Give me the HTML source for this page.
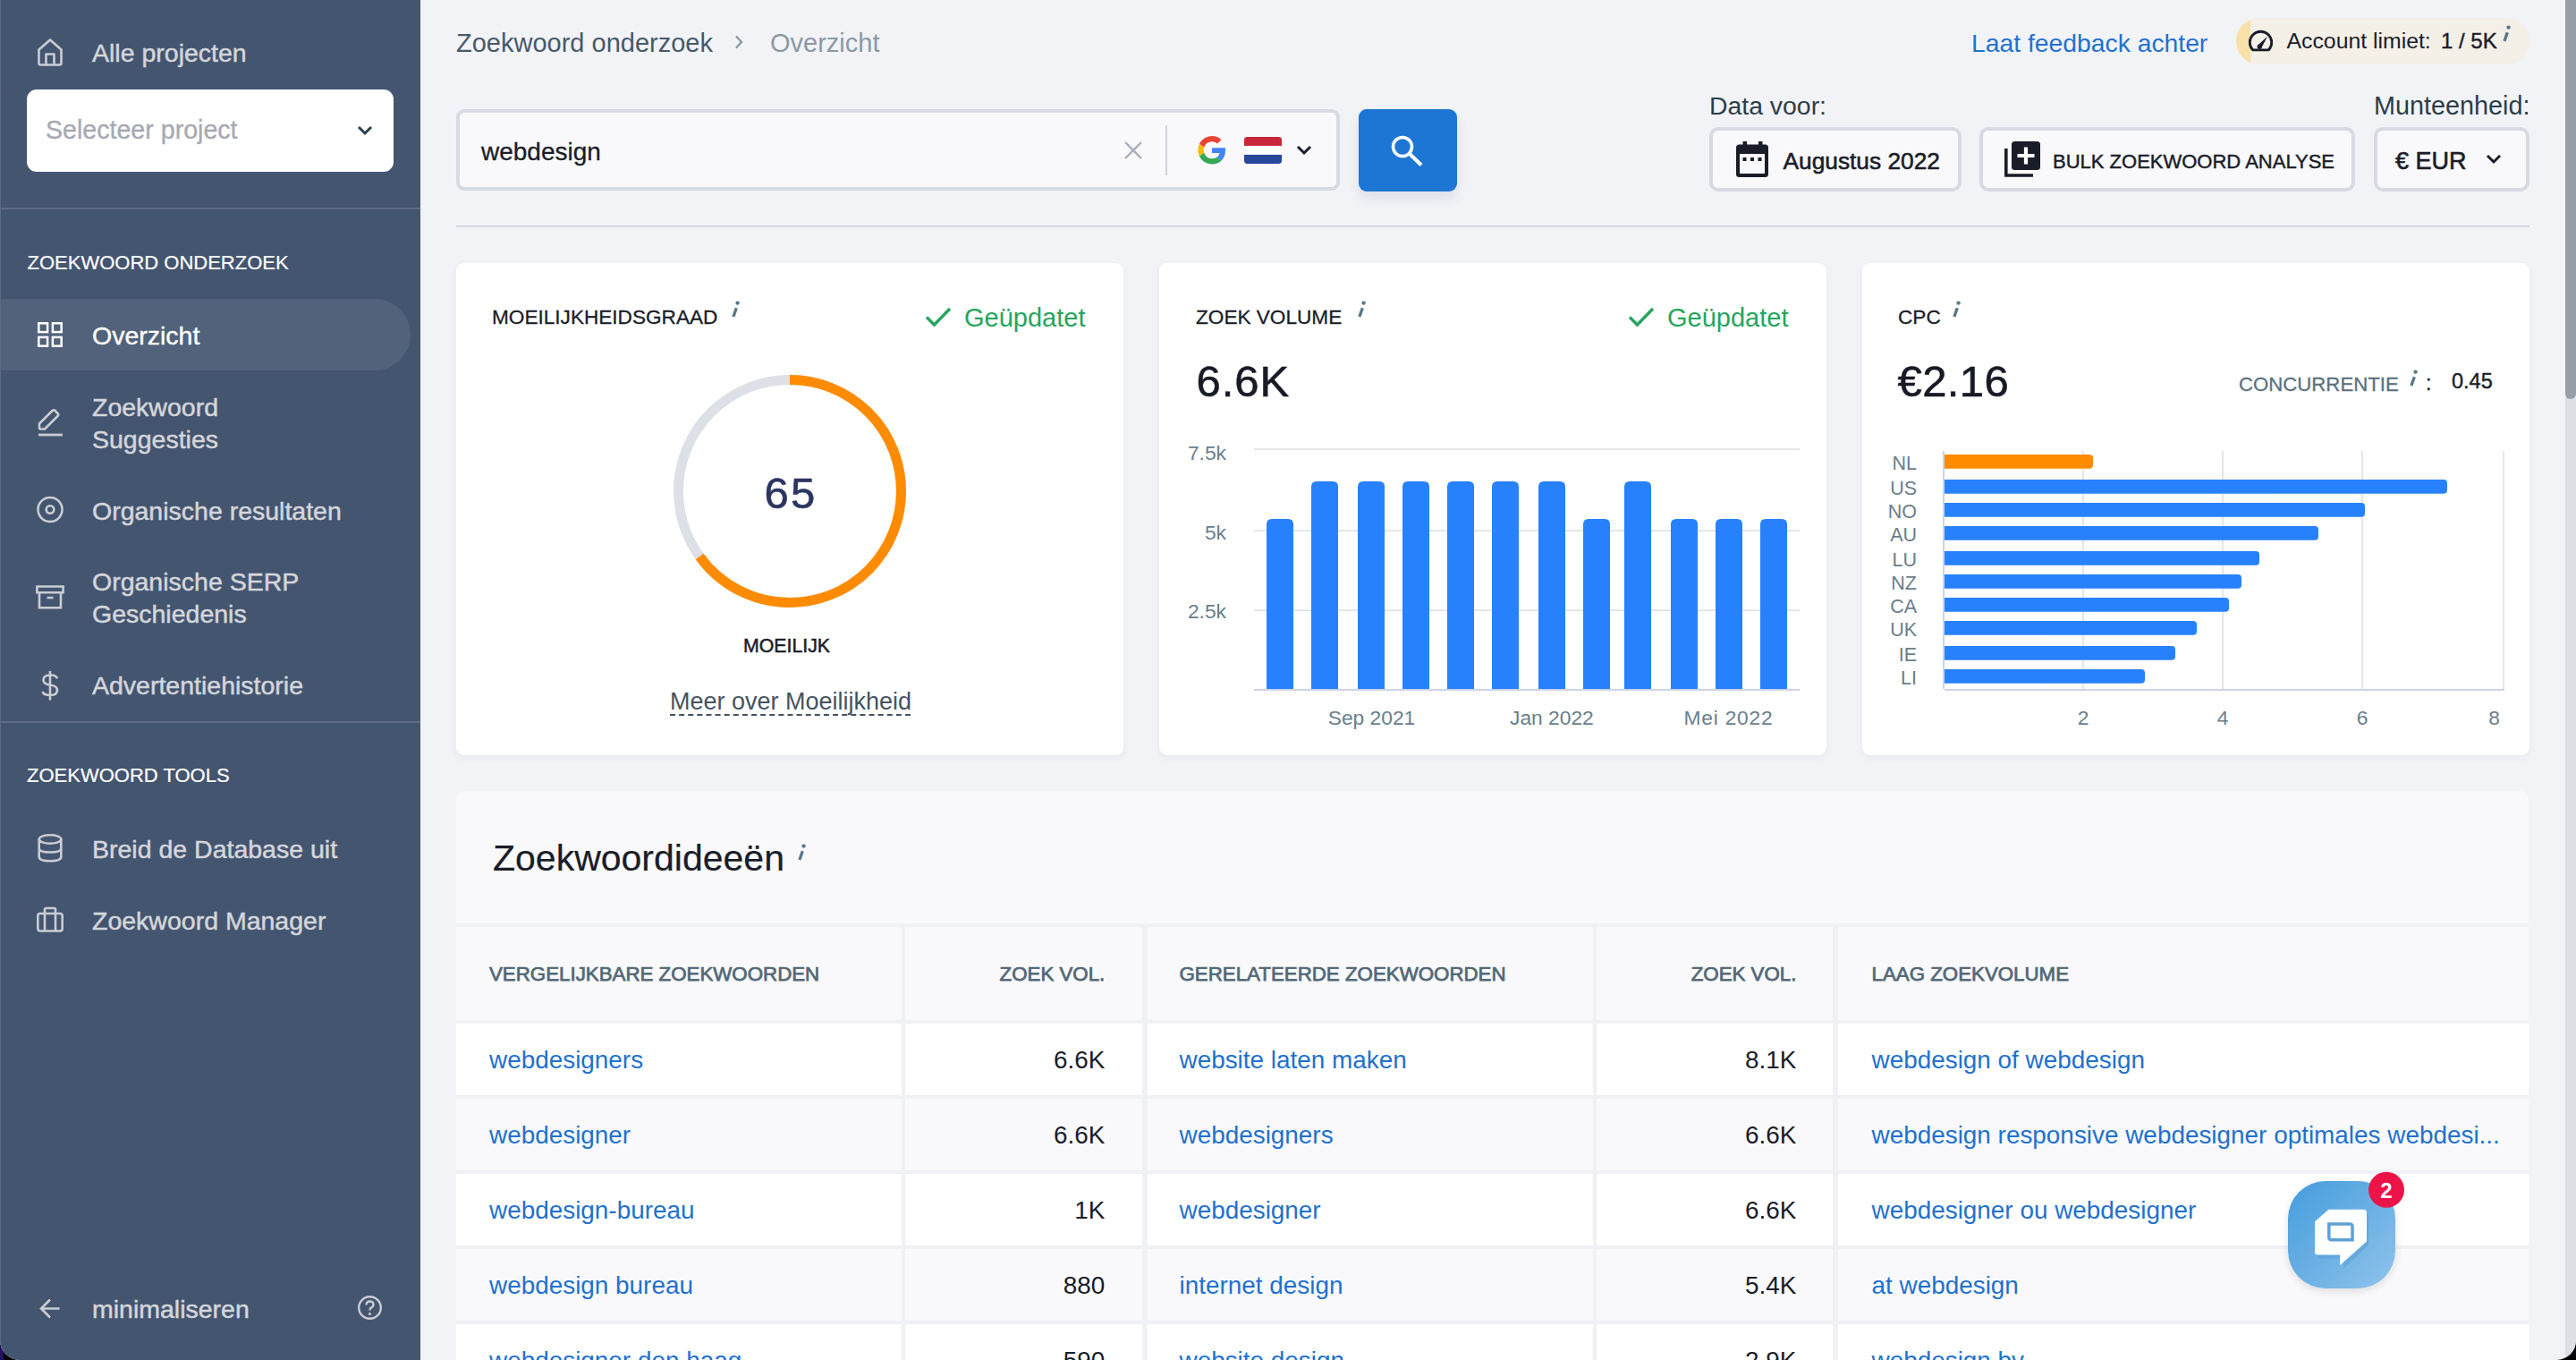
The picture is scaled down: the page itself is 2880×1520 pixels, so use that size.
<!DOCTYPE html>
<html><head><meta charset="utf-8">
<style>
*{margin:0;padding:0;box-sizing:border-box}
html,body{width:2880px;height:1520px;overflow:hidden;background:linear-gradient(to right,#23105F 0 4px,#000 4px)}
body{font-family:"Liberation Sans",sans-serif;position:relative}
#win{position:absolute;left:0;top:0;width:2880px;height:1520px;background:#F2F3F7;border-radius:0 0 22px 22px;overflow:hidden}
.t{position:absolute;line-height:1;white-space:nowrap}
.abs{position:absolute}
#side{position:absolute;left:0;top:0;width:470px;height:1520px;background:#445570}
.sl{color:#D3D6DB;font-size:28.5px;-webkit-text-stroke:0.5px #D3D6DB}
.sh{color:#FFFFFF;font-size:22px;-webkit-text-stroke:0.2px #fff}
.ic{position:absolute;overflow:visible}
.card{position:absolute;top:294px;width:746px;height:550px;background:#fff;border-radius:9px;box-shadow:0 3px 8px rgba(40,50,80,0.05)}
.ct{color:#1A1D29;font-size:22.6px;-webkit-text-stroke:0.3px #1A1D29}
.sup{position:absolute;color:#5E7686;font-style:italic;font-size:21px;line-height:1;-webkit-text-stroke:0.3px #5E7686}
.upd{color:#27A55E;font-size:29px}
.ax{color:#6A7E8C;font-size:22.8px}
.big{color:#181B26;font-size:49px;-webkit-text-stroke:0.6px #181B26}
</style></head><body>
<div id="win">
<!-- SIDEBAR -->
<div id="side">
  <!-- home icon -->
  <svg class="ic" style="left:40px;top:41px" width="32" height="34" viewBox="0 0 32 34"><path d="M3.5 14.5 L16 3.5 L28.5 14.5 V29.5 Q28.5 31.5 26.5 31.5 H5.5 Q3.5 31.5 3.5 29.5 Z M11.5 31.5 V19.5 H20.5 V31.5" fill="none" stroke="#C9CDD4" stroke-width="2.6" stroke-linejoin="round"/></svg>
  <div class="t sl" style="left:103px;top:45.2px">Alle projecten</div>
  <div class="abs" style="left:30px;top:100px;width:410px;height:92px;background:#fff;border-radius:11px"></div>
  <div class="t" style="left:51px;top:131.4px;font-size:28.6px;color:#A6A9B3;-webkit-text-stroke:0.3px #A6A9B3">Selecteer project</div>
  <svg class="ic" style="left:398px;top:139px" width="20" height="14" viewBox="0 0 20 14"><path d="M3 3 L10 10 L17 3" fill="none" stroke="#2E3F4A" stroke-width="3"/></svg>
  <div class="abs" style="left:0;top:232px;width:470px;height:2px;background:#5D6C83"></div>
  <div class="t sh" style="left:30.5px;top:283.4px">ZOEKWOORD ONDERZOEK</div>
  <div class="abs" style="left:0;top:334px;width:459px;height:80px;background:#52627A;border-radius:0 40px 40px 0"></div>
  <svg class="ic" style="left:42px;top:360px" width="28" height="28" viewBox="0 0 28 28"><g fill="none" stroke="#fff" stroke-width="2.5"><rect x="1.3" y="1.3" width="9.8" height="9.8"/><rect x="16.9" y="1.3" width="9.8" height="9.8"/><rect x="1.3" y="16.9" width="9.8" height="9.8"/><rect x="16.9" y="16.9" width="9.8" height="9.8"/></g></svg>
  <div class="t sl" style="left:103px;top:361px;color:#fff;-webkit-text-stroke:0.4px #fff">Overzicht</div>
  <!-- pencil -->
  <svg class="ic" style="left:41px;top:455px" width="30" height="34" viewBox="0 0 30 34"><path d="M3 23.5 V18.5 L17.5 4 Q19 2.6 20.5 4 L23.5 7 Q25 8.5 23.5 10 L9 24.5 H3.5 Z" fill="none" stroke="#C9CDD4" stroke-width="2.6" stroke-linejoin="round"/><path d="M2 31 H29" stroke="#C9CDD4" stroke-width="2.8"/></svg>
  <div class="t sl" style="left:103px;top:440.9px">Zoekwoord</div>
  <div class="t sl" style="left:103px;top:476.9px">Suggesties</div>
  <!-- target -->
  <svg class="ic" style="left:40px;top:554px" width="32" height="32" viewBox="0 0 32 32"><circle cx="16" cy="15.5" r="13.5" fill="none" stroke="#C9CDD4" stroke-width="2.6"/><circle cx="16" cy="15.5" r="4.3" fill="none" stroke="#C9CDD4" stroke-width="2.6"/></svg>
  <div class="t sl" style="left:103px;top:557.3px">Organische resultaten</div>
  <!-- box -->
  <svg class="ic" style="left:39px;top:654px" width="34" height="28" viewBox="0 0 34 28"><path d="M2.4 1.5 H31.6 V8.2 H2.4 Z M5 8.2 V25.3 H29 V8.2 M13.5 14 H20.5" fill="none" stroke="#C9CDD4" stroke-width="2.6"/></svg>
  <div class="t sl" style="left:103px;top:635.9px">Organische SERP</div>
  <div class="t sl" style="left:103px;top:671.9px">Geschiedenis</div>
  <!-- dollar -->
  <svg class="ic" style="left:44px;top:749px" width="24" height="35" viewBox="0 0 24 35"><path d="M20 9.5 Q19 5.5 12.5 5.5 Q4.5 5.5 4.5 11 Q4.5 15.5 12 16.5 Q20 17.5 20 22.5 Q20 28 12 28 Q5 28 3.5 24 M12 1 V33.5" fill="none" stroke="#C9CDD4" stroke-width="2.6"/></svg>
  <div class="t sl" style="left:103px;top:751.9px">Advertentiehistorie</div>
  <div class="abs" style="left:0;top:805.5px;width:470px;height:2px;background:#5D6C83"></div>
  <div class="t sh" style="left:30px;top:856.2px">ZOEKWOORD TOOLS</div>
  <!-- db -->
  <svg class="ic" style="left:41px;top:931px" width="30" height="34" viewBox="0 0 30 34"><g fill="none" stroke="#C9CDD4" stroke-width="2.6"><ellipse cx="15" cy="7" rx="12.3" ry="4.8"/><path d="M2.7 7 V26.5 Q2.7 31.3 15 31.3 Q27.3 31.3 27.3 26.5 V7 M2.7 17 Q2.7 21.5 15 21.5 Q27.3 21.5 27.3 17"/></g></svg>
  <div class="t sl" style="left:103px;top:935.2px">Breid de Database uit</div>
  <!-- briefcase -->
  <svg class="ic" style="left:40px;top:1013px" width="32" height="30" viewBox="0 0 32 30"><g fill="none" stroke="#C9CDD4" stroke-width="2.6" stroke-linejoin="round"><rect x="2.3" y="8" width="27.4" height="19.5" rx="2.5"/><path d="M10 8 V3.5 Q10 2 11.5 2 H20.5 Q22 2 22 3.5 V8 M10 8 V27.5 M22 8 V27.5"/></g></svg>
  <div class="t sl" style="left:103px;top:1014.7px">Zoekwoord Manager</div>
  <!-- arrow -->
  <svg class="ic" style="left:43px;top:1449px" width="26" height="27" viewBox="0 0 26 27"><path d="M23.5 13.5 H3.5 M13 3.5 L3 13.5 L13 23.5" fill="none" stroke="#C9CDD4" stroke-width="2.6"/></svg>
  <div class="t sl" style="left:103px;top:1448.9px">minimaliseren</div>
  <svg class="ic" style="left:399px;top:1447px" width="30" height="30" viewBox="0 0 30 30"><circle cx="14.5" cy="14.5" r="12.3" fill="none" stroke="#C9CDD4" stroke-width="2.4"/><path d="M10.5 11.5 Q10.5 7.5 14.5 7.5 Q18.5 7.5 18.5 11 Q18.5 13.5 15.5 14.8 Q14.5 15.4 14.5 17.5" fill="none" stroke="#C9CDD4" stroke-width="2.4"/><circle cx="14.5" cy="21.5" r="1.6" fill="#C9CDD4"/></svg>
</div>
<!-- MAIN_START -->
<!-- header -->
<div class="t" style="left:510px;top:33.6px;font-size:29px;color:#48596A">Zoekwoord onderzoek</div>
<svg class="ic" style="left:818px;top:37px" width="16" height="20" viewBox="0 0 16 20"><path d="M5 3.5 L11 10 L5 16.5" fill="none" stroke="#8795A1" stroke-width="2.2"/></svg>
<div class="t" style="left:861px;top:33.6px;font-size:29px;color:#8C98A3">Overzicht</div>
<div class="abs" style="left:510px;top:122px;width:988px;height:91px;border:4px solid #D7DAE3;border-radius:9px;background:#F9F9FB"></div>
<div class="t" style="left:538px;top:155.6px;font-size:28px;color:#1A1D29;-webkit-text-stroke:0.3px #1A1D29">webdesign</div>
<svg class="ic" style="left:1255px;top:156px" width="24" height="24" viewBox="0 0 24 24"><path d="M3 3 L21 21 M21 3 L3 21" stroke="#AAADBD" stroke-width="2.4"/></svg>
<div class="abs" style="left:1303px;top:140px;width:2px;height:56px;background:#D0D2DE"></div>
<!-- google G -->
<svg class="ic" style="left:1339px;top:151.7px" width="32" height="31.5" viewBox="0 0 48 48"><path fill="#EA4335" d="M24 9.5c3.54 0 6.71 1.22 9.21 3.6l6.85-6.85C35.9 2.38 30.47 0 24 0 14.62 0 6.51 5.38 2.56 13.22l7.98 6.19C12.43 13.72 17.74 9.5 24 9.5z"/><path fill="#4285F4" d="M46.98 24.55c0-1.57-.15-3.09-.38-4.55H24v9.02h12.94c-.58 2.96-2.26 5.48-4.78 7.18l7.73 6c4.51-4.18 7.09-10.36 7.09-17.65z"/><path fill="#FBBC05" d="M10.53 28.59c-.48-1.45-.76-2.99-.76-4.59s.27-3.14.76-4.59l-7.98-6.19C.92 16.46 0 20.12 0 24c0 3.88.92 7.54 2.56 10.78l7.97-6.19z"/><path fill="#34A853" d="M24 48c6.48 0 11.93-2.13 15.89-5.81l-7.73-6c-2.15 1.45-4.92 2.3-8.16 2.3-6.26 0-11.57-4.22-13.47-9.91l-7.98 6.19C6.51 42.62 14.62 48 24 48z"/></svg>
<svg class="ic" style="left:1391px;top:153px" width="42" height="30" viewBox="0 0 43 31" preserveAspectRatio="none"><defs><clipPath id="fc"><rect x="0" y="0" width="43" height="31" rx="3.5"/></clipPath></defs><g clip-path="url(#fc)"><rect width="43" height="10.4" fill="#C8283A"/><rect y="10.3" width="43" height="10.4" fill="#FFFFFF"/><rect y="20.6" width="43" height="10.4" fill="#27479A"/></g></svg>
<svg class="ic" style="left:1448px;top:160px" width="20" height="16" viewBox="0 0 20 16"><path d="M3 4 L10 11 L17 4" fill="none" stroke="#1A1D29" stroke-width="3"/></svg>
<div class="abs" style="left:1519px;top:122px;width:110px;height:92px;background:#1D76D3;border-radius:9px;box-shadow:0 8px 14px rgba(30,60,120,0.10)"></div>
<svg class="ic" style="left:1553px;top:150px" width="40" height="37" viewBox="0 0 40 37"><circle cx="15" cy="14" r="10.5" fill="none" stroke="#fff" stroke-width="3.6"/><path d="M22.5 21.5 L36 34.5" stroke="#fff" stroke-width="4.2"/></svg>

<div class="t" style="left:2204px;top:33.5px;font-size:28.3px;color:#1F72CF">Laat feedback achter</div>
<div class="abs" style="left:2500px;top:20px;width:328px;height:52px;background:#F4EFE7;border-radius:26px;overflow:hidden"><div class="abs" style="left:0;top:0;width:16px;height:52px;background:#F9E0A9"></div></div>
<svg class="ic" style="left:2512px;top:33px" width="31" height="26" viewBox="0 0 31 26"><path d="M6.6 22.8 A12.2 12.2 0 1 1 24.4 22.8 Z" fill="none" stroke="#1A1D29" stroke-width="2.8" stroke-linejoin="round"/><path d="M12.3 17.6 L23 7.8 L16.2 20.8 Z" fill="#1A1D29"/><circle cx="14.2" cy="19.2" r="2.6" fill="#1A1D29"/></svg>
<div class="t" style="left:2556.5px;top:34px;font-size:24.8px;color:#1A1D29">Account limiet:</div>
<div class="t" style="left:2729px;top:34px;font-size:24px;color:#1A1D29;-webkit-text-stroke:0.4px #1A1D29">1 / 5K</div>
<svg class="ic" style="left:2797.5px;top:28px" width="9" height="19" viewBox="0 0 9 19"><path d="M1.9 18 L5.3 8.2" stroke="#587688" stroke-width="3.3"/><circle cx="6.6" cy="2.6" r="2.2" fill="#587688"/></svg>

<div class="t" style="left:1911px;top:104px;font-size:28.4px;color:#2E3D48">Data voor:</div>
<div class="t" style="left:2654px;top:104px;font-size:28.8px;color:#2E3D48">Munteenheid:</div>
<div class="abs" style="left:1911px;top:142px;width:282px;height:72px;border:4px solid #D7DAE3;border-radius:10px;background:#F9F9FB"></div>
<svg class="ic" style="left:1940px;top:157px" width="38" height="42" viewBox="0 0 38 42"><rect x="1" y="4.5" width="36" height="36.5" rx="3.5" fill="#1A1D29"/><rect x="5" y="15" width="28" height="22" fill="#F9F9FB"/><rect x="8.5" y="1" width="4.5" height="6" fill="#1A1D29"/><rect x="26" y="1" width="4.5" height="6" fill="#1A1D29"/><rect x="8.5" y="19" width="4" height="4" fill="#1A1D29"/><rect x="17" y="19" width="4" height="4" fill="#1A1D29"/><rect x="25.5" y="19" width="4" height="4" fill="#1A1D29"/></svg>
<div class="t" style="left:1993.5px;top:166.7px;font-size:26.3px;color:#1A1D29;-webkit-text-stroke:0.55px #1A1D29">Augustus 2022</div>
<div class="abs" style="left:2213px;top:142px;width:420px;height:72px;border:4px solid #D7DAE3;border-radius:10px;background:#F9F9FB"></div>
<svg class="ic" style="left:2240px;top:157px" width="42" height="42" viewBox="0 0 42 42"><rect x="9" y="1" width="32" height="32" rx="3.5" fill="#1A1D29"/><path d="M25 7.5 V26.5 M15.5 17 H34.5" stroke="#fff" stroke-width="4.2"/><path d="M2.8 9 V39 H33" fill="none" stroke="#1A1D29" stroke-width="3.6"/></svg>
<div class="t" style="left:2295px;top:169.7px;font-size:22px;color:#1A1D29;-webkit-text-stroke:0.45px #1A1D29">BULK ZOEKWOORD ANALYSE</div>
<div class="abs" style="left:2654px;top:142px;width:174px;height:72px;border:4px solid #D7DAE3;border-radius:10px;background:#F9F9FB"></div>
<div class="t" style="left:2678px;top:167px;font-size:27px;color:#1A1D29;-webkit-text-stroke:0.6px #1A1D29">€ EUR</div>
<svg class="ic" style="left:2778px;top:170px" width="20" height="16" viewBox="0 0 20 16"><path d="M3 4 L10 11 L17 4" fill="none" stroke="#1A1D29" stroke-width="3"/></svg>
<div class="abs" style="left:510px;top:252px;width:2318px;height:2px;background:#D5D7E2"></div>
<!-- CARDS -->
<div class="card" style="left:510px"></div>
<div class="card" style="left:1296px"></div>
<div class="card" style="left:2082px"></div>
<!-- card1 -->
<div class="t ct" style="left:550px;top:343.9px">MOEILIJKHEIDSGRAAD</div>
<svg class="ic" style="left:818px;top:336px" width="9" height="19" viewBox="0 0 9 19"><path d="M1.9 18 L5.3 8.2" stroke="#587688" stroke-width="3.3"/><circle cx="6.6" cy="2.6" r="2.2" fill="#587688"/></svg>
<svg class="ic" style="left:1033px;top:341px" width="32" height="26" viewBox="0 0 32 26"><path d="M3 13.5 L11.5 22 L29 4" fill="none" stroke="#27A55E" stroke-width="3.4"/></svg>
<div class="t upd" style="left:1078px;top:340.7px">Geüpdatet</div>
<svg class="ic" style="left:740px;top:406px" width="286" height="286" viewBox="0 0 286 286"><circle cx="143" cy="143" r="124.5" fill="none" stroke="#DDE0E6" stroke-width="11"/><circle cx="143" cy="143" r="124.5" fill="none" stroke="#FF8C00" stroke-width="11" stroke-dasharray="508.5 1000" transform="rotate(-90 143 143)"/></svg>
<div class="t" style="left:784px;top:526.7px;width:200px;text-align:center;font-size:49px;letter-spacing:2.2px;color:#2B3560;-webkit-text-stroke:0.6px #2B3560">65</div>
<div class="t" style="left:779.5px;top:712px;width:200px;text-align:center;font-size:21.3px;color:#1A1D29;-webkit-text-stroke:0.5px #1A1D29">MOEILIJK</div>
<div class="t" style="left:749px;top:771.2px;font-size:27px;color:#44535F">Meer over Moeilijkheid</div>
<div class="abs" style="left:749px;top:798px;width:269px;height:0;border-top:2px dashed #44535F"></div>
<!-- card2 -->
<div class="t ct" style="left:1337px;top:343.9px">ZOEK VOLUME</div>
<svg class="ic" style="left:1518px;top:336px" width="9" height="19" viewBox="0 0 9 19"><path d="M1.9 18 L5.3 8.2" stroke="#587688" stroke-width="3.3"/><circle cx="6.6" cy="2.6" r="2.2" fill="#587688"/></svg>
<svg class="ic" style="left:1819px;top:341px" width="32" height="26" viewBox="0 0 32 26"><path d="M3 13.5 L11.5 22 L29 4" fill="none" stroke="#27A55E" stroke-width="3.4"/></svg>
<div class="t upd" style="left:1864px;top:340.7px">Geüpdatet</div>
<div class="t big" style="left:1337.5px;top:401.5px;letter-spacing:1px">6.6K</div>
<svg class="ic" style="left:1296px;top:480px" width="746" height="300" viewBox="1296 480 746 300">
 <g fill="#E3E4E8"><rect x="1402" y="501.2" width="610" height="1.8"/><rect x="1402" y="592.2" width="610" height="1.8"/><rect x="1402" y="681.2" width="610" height="1.8"/></g>
 <g fill="#2781FD">
  <path d="M1416 770 V586 Q1416 580 1422 580 H1440 Q1446 580 1446 586 V770 Z"/>
  <path d="M1466 770 V544 Q1466 538 1472 538 H1490 Q1496 538 1496 544 V770 Z"/>
  <path d="M1518 770 V544 Q1518 538 1524 538 H1542 Q1548 538 1548 544 V770 Z"/>
  <path d="M1568 770 V544 Q1568 538 1574 538 H1592 Q1598 538 1598 544 V770 Z"/>
  <path d="M1618 770 V544 Q1618 538 1624 538 H1642 Q1648 538 1648 544 V770 Z"/>
  <path d="M1668 770 V544 Q1668 538 1674 538 H1692 Q1698 538 1698 544 V770 Z"/>
  <path d="M1720 770 V544 Q1720 538 1726 538 H1744 Q1750 538 1750 544 V770 Z"/>
  <path d="M1770 770 V586 Q1770 580 1776 580 H1794 Q1800 580 1800 586 V770 Z"/>
  <path d="M1816 770 V544 Q1816 538 1822 538 H1840 Q1846 538 1846 544 V770 Z"/>
  <path d="M1868 770 V586 Q1868 580 1874 580 H1892 Q1898 580 1898 586 V770 Z"/>
  <path d="M1918 770 V586 Q1918 580 1924 580 H1942 Q1948 580 1948 586 V770 Z"/>
  <path d="M1968 770 V586 Q1968 580 1974 580 H1992 Q1998 580 1998 586 V770 Z"/>
 </g>
 <rect x="1402" y="770" width="610" height="2" fill="#CCD4EA"/>
</svg>
<div class="t ax" style="left:1271px;top:495.2px;width:100px;text-align:right">7.5k</div>
<div class="t ax" style="left:1271px;top:583.5px;width:100px;text-align:right">5k</div>
<div class="t ax" style="left:1271px;top:672.2px;width:100px;text-align:right">2.5k</div>
<div class="t ax" style="left:1484.7px;top:790.7px">Sep 2021</div>
<div class="t ax" style="left:1688px;top:790.7px">Jan 2022</div>
<div class="t ax" style="left:1882.6px;top:790.7px;letter-spacing:0.75px">Mei 2022</div>
<!-- card3 -->
<div class="t ct" style="left:2122px;top:343.9px">CPC</div>
<svg class="ic" style="left:2183px;top:336px" width="9" height="19" viewBox="0 0 9 19"><path d="M1.9 18 L5.3 8.2" stroke="#587688" stroke-width="3.3"/><circle cx="6.6" cy="2.6" r="2.2" fill="#587688"/></svg>
<div class="t big" style="left:2121.5px;top:401.5px;letter-spacing:0.4px">€2.16</div>
<div class="t" style="left:2503px;top:418.9px;font-size:22.2px;color:#5B7180;-webkit-text-stroke:0.3px #5B7180">CONCURRENTIE</div>
<svg class="ic" style="left:2694px;top:412.5px" width="9" height="19" viewBox="0 0 9 19"><path d="M1.9 18 L5.3 8.2" stroke="#587688" stroke-width="3.3"/><circle cx="6.6" cy="2.6" r="2.2" fill="#587688"/></svg>
<div class="t" style="left:2712px;top:417px;font-size:23px;color:#1A1D29;-webkit-text-stroke:0.3px #1A1D29">:</div>
<div class="t" style="left:2741px;top:414.9px;font-size:23.5px;color:#1A1D29;-webkit-text-stroke:0.4px #1A1D29">0.45</div>
<svg class="ic" style="left:2082px;top:480px" width="746" height="300" viewBox="2082 480 746 300">
 <g fill="#E4E6EB"><rect x="2328" y="504" width="2" height="266"/><rect x="2484" y="504" width="2" height="266"/><rect x="2640" y="504" width="2" height="266"/><rect x="2798" y="504" width="2" height="266"/></g>
 <rect x="2172" y="504" width="2" height="266" fill="#CCD4EA"/>
 <rect x="2174" y="770" width="626" height="2" fill="#CCD4EA"/>
 <g fill="#2781FD">
  <path d="M2174 508 H2336 Q2340 508 2340 512 V519.7 Q2340 523.7 2336 523.7 H2174 Z" fill="#FF8C00"/>
  <path d="M2174 536 H2732 Q2736 536 2736 540 V547.7 Q2736 551.7 2732 551.7 H2174 Z"/>
  <path d="M2174 562 H2640 Q2644 562 2644 566 V573.7 Q2644 577.7 2640 577.7 H2174 Z"/>
  <path d="M2174 588 H2588 Q2592 588 2592 592 V599.7 Q2592 603.7 2588 603.7 H2174 Z"/>
  <path d="M2174 616 H2522 Q2526 616 2526 620 V627.7 Q2526 631.7 2522 631.7 H2174 Z"/>
  <path d="M2174 642 H2502 Q2506 642 2506 646 V653.7 Q2506 657.7 2502 657.7 H2174 Z"/>
  <path d="M2174 668 H2488 Q2492 668 2492 672 V679.7 Q2492 683.7 2488 683.7 H2174 Z"/>
  <path d="M2174 694 H2452 Q2456 694 2456 698 V705.7 Q2456 709.7 2452 709.7 H2174 Z"/>
  <path d="M2174 722 H2428 Q2432 722 2432 726 V733.7 Q2432 737.7 2428 737.7 H2174 Z"/>
  <path d="M2174 748 H2394 Q2398 748 2398 752 V759.7 Q2398 763.7 2394 763.7 H2174 Z"/>
 </g>
</svg>
<div class="t ax" style="left:2043px;top:508.3px;width:100px;text-align:right;font-size:21.5px">NL</div>
<div class="t ax" style="left:2043px;top:536.3px;width:100px;text-align:right;font-size:21.5px">US</div>
<div class="t ax" style="left:2043px;top:562.3px;width:100px;text-align:right;font-size:21.5px">NO</div>
<div class="t ax" style="left:2043px;top:588.3px;width:100px;text-align:right;font-size:21.5px">AU</div>
<div class="t ax" style="left:2043px;top:616.3px;width:100px;text-align:right;font-size:21.5px">LU</div>
<div class="t ax" style="left:2043px;top:642.3px;width:100px;text-align:right;font-size:21.5px">NZ</div>
<div class="t ax" style="left:2043px;top:668.3px;width:100px;text-align:right;font-size:21.5px">CA</div>
<div class="t ax" style="left:2043px;top:694.3px;width:100px;text-align:right;font-size:21.5px">UK</div>
<div class="t ax" style="left:2043px;top:722.3px;width:100px;text-align:right;font-size:21.5px">IE</div>
<div class="t ax" style="left:2043px;top:748.3px;width:100px;text-align:right;font-size:21.5px">LI</div>
<div class="t ax" style="left:2279px;top:790.7px;width:100px;text-align:center">2</div>
<div class="t ax" style="left:2435px;top:790.7px;width:100px;text-align:center">4</div>
<div class="t ax" style="left:2591px;top:790.7px;width:100px;text-align:center">6</div>
<div class="t ax" style="left:2738.6px;top:790.7px;width:100px;text-align:center">8</div>
<!-- TABLE -->
<div class="abs" style="left:510px;top:884px;width:2317px;height:700px;background:#F0F1F5;border-radius:9px 9px 0 0;overflow:hidden">
 <div class="abs" style="left:0;top:0;width:2317px;height:148px;background:#F9F9FB"></div>
</div>
<div class="t" style="left:551px;top:939.3px;font-size:41px;color:#1A1D29;-webkit-text-stroke:0.2px #1A1D29">Zoekwoordideeën</div>
<svg class="ic" style="left:891.5px;top:943px" width="9" height="19" viewBox="0 0 9 19"><path d="M1.9 18 L5.3 8.2" stroke="#587688" stroke-width="3.3"/><circle cx="6.6" cy="2.6" r="2.2" fill="#587688"/></svg>
<div id="tbl">
<div class="abs" style="left:510px;top:1036px;width:498px;height:104px;background:#F9F9FB"></div>
<div class="abs" style="left:1012px;top:1036px;width:265px;height:104px;background:#F9F9FB"></div>
<div class="abs" style="left:1283px;top:1036px;width:498px;height:104px;background:#F9F9FB"></div>
<div class="abs" style="left:1785px;top:1036px;width:264px;height:104px;background:#F9F9FB"></div>
<div class="abs" style="left:2055px;top:1036px;width:772px;height:104px;background:#F9F9FB"></div>
<div class="abs" style="left:510px;top:1144px;width:498px;height:80px;background:#FFFFFF"></div>
<div class="abs" style="left:1012px;top:1144px;width:265px;height:80px;background:#FFFFFF"></div>
<div class="abs" style="left:1283px;top:1144px;width:498px;height:80px;background:#FFFFFF"></div>
<div class="abs" style="left:1785px;top:1144px;width:264px;height:80px;background:#FFFFFF"></div>
<div class="abs" style="left:2055px;top:1144px;width:772px;height:80px;background:#FFFFFF"></div>
<div class="abs" style="left:510px;top:1228px;width:498px;height:80px;background:#F9F9FB"></div>
<div class="abs" style="left:1012px;top:1228px;width:265px;height:80px;background:#F9F9FB"></div>
<div class="abs" style="left:1283px;top:1228px;width:498px;height:80px;background:#F9F9FB"></div>
<div class="abs" style="left:1785px;top:1228px;width:264px;height:80px;background:#F9F9FB"></div>
<div class="abs" style="left:2055px;top:1228px;width:772px;height:80px;background:#F9F9FB"></div>
<div class="abs" style="left:510px;top:1312px;width:498px;height:80px;background:#FFFFFF"></div>
<div class="abs" style="left:1012px;top:1312px;width:265px;height:80px;background:#FFFFFF"></div>
<div class="abs" style="left:1283px;top:1312px;width:498px;height:80px;background:#FFFFFF"></div>
<div class="abs" style="left:1785px;top:1312px;width:264px;height:80px;background:#FFFFFF"></div>
<div class="abs" style="left:2055px;top:1312px;width:772px;height:80px;background:#FFFFFF"></div>
<div class="abs" style="left:510px;top:1396px;width:498px;height:80px;background:#F9F9FB"></div>
<div class="abs" style="left:1012px;top:1396px;width:265px;height:80px;background:#F9F9FB"></div>
<div class="abs" style="left:1283px;top:1396px;width:498px;height:80px;background:#F9F9FB"></div>
<div class="abs" style="left:1785px;top:1396px;width:264px;height:80px;background:#F9F9FB"></div>
<div class="abs" style="left:2055px;top:1396px;width:772px;height:80px;background:#F9F9FB"></div>
<div class="abs" style="left:510px;top:1480px;width:498px;height:80px;background:#FFFFFF"></div>
<div class="abs" style="left:1012px;top:1480px;width:265px;height:80px;background:#FFFFFF"></div>
<div class="abs" style="left:1283px;top:1480px;width:498px;height:80px;background:#FFFFFF"></div>
<div class="abs" style="left:1785px;top:1480px;width:264px;height:80px;background:#FFFFFF"></div>
<div class="abs" style="left:2055px;top:1480px;width:772px;height:80px;background:#FFFFFF"></div>
<div class="t" style="font-size:22.3px;color:#536877;-webkit-text-stroke:0.75px #536877;left:547px;top:1077.5px">VERGELIJKBARE ZOEKWOORDEN</div>
<div class="t" style="font-size:22.3px;color:#536877;-webkit-text-stroke:0.75px #536877;left:1035.3px;width:200px;text-align:right;top:1077.5px">ZOEK VOL.</div>
<div class="t" style="font-size:22.3px;color:#536877;-webkit-text-stroke:0.75px #536877;left:1318.5px;top:1077.5px">GERELATEERDE ZOEKWOORDEN</div>
<div class="t" style="font-size:22.3px;color:#536877;-webkit-text-stroke:0.75px #536877;left:1808.4px;width:200px;text-align:right;top:1077.5px">ZOEK VOL.</div>
<div class="t" style="font-size:22.3px;color:#536877;-webkit-text-stroke:0.75px #536877;left:2092.5px;top:1077.5px">LAAG ZOEKVOLUME</div>
<div class="t" style="font-size:27.9px;color:#1F71CE;top:1171.13px;left:547px">webdesigners</div>
<div class="t" style="font-size:27.9px;color:#1A1D29;top:1171.13px;width:200px;text-align:right;left:1035.3px">6.6K</div>
<div class="t" style="font-size:27.9px;color:#1F71CE;top:1171.13px;left:1318.5px">website laten maken</div>
<div class="t" style="font-size:27.9px;color:#1A1D29;top:1171.13px;width:200px;text-align:right;left:1808.4px">8.1K</div>
<div class="t" style="font-size:27.9px;color:#1F71CE;top:1171.13px;left:2092.5px">webdesign of webdesign</div>
<div class="t" style="font-size:27.9px;color:#1F71CE;top:1255.13px;left:547px">webdesigner</div>
<div class="t" style="font-size:27.9px;color:#1A1D29;top:1255.13px;width:200px;text-align:right;left:1035.3px">6.6K</div>
<div class="t" style="font-size:27.9px;color:#1F71CE;top:1255.13px;left:1318.5px">webdesigners</div>
<div class="t" style="font-size:27.9px;color:#1A1D29;top:1255.13px;width:200px;text-align:right;left:1808.4px">6.6K</div>
<div class="t" style="font-size:27.9px;color:#1F71CE;top:1255.13px;left:2092.5px">webdesign responsive webdesigner optimales webdesi...</div>
<div class="t" style="font-size:27.9px;color:#1F71CE;top:1339.13px;left:547px">webdesign-bureau</div>
<div class="t" style="font-size:27.9px;color:#1A1D29;top:1339.13px;width:200px;text-align:right;left:1035.3px">1K</div>
<div class="t" style="font-size:27.9px;color:#1F71CE;top:1339.13px;left:1318.5px">webdesigner</div>
<div class="t" style="font-size:27.9px;color:#1A1D29;top:1339.13px;width:200px;text-align:right;left:1808.4px">6.6K</div>
<div class="t" style="font-size:27.9px;color:#1F71CE;top:1339.13px;left:2092.5px">webdesigner ou webdesigner</div>
<div class="t" style="font-size:27.9px;color:#1F71CE;top:1423.13px;left:547px">webdesign bureau</div>
<div class="t" style="font-size:27.9px;color:#1A1D29;top:1423.13px;width:200px;text-align:right;left:1035.3px">880</div>
<div class="t" style="font-size:27.9px;color:#1F71CE;top:1423.13px;left:1318.5px">internet design</div>
<div class="t" style="font-size:27.9px;color:#1A1D29;top:1423.13px;width:200px;text-align:right;left:1808.4px">5.4K</div>
<div class="t" style="font-size:27.9px;color:#1F71CE;top:1423.13px;left:2092.5px">at webdesign</div>
<div class="t" style="font-size:27.9px;color:#1F71CE;top:1507.13px;left:547px">webdesigner den haag</div>
<div class="t" style="font-size:27.9px;color:#1A1D29;top:1507.13px;width:200px;text-align:right;left:1035.3px">590</div>
<div class="t" style="font-size:27.9px;color:#1F71CE;top:1507.13px;left:1318.5px">website design</div>
<div class="t" style="font-size:27.9px;color:#1A1D29;top:1507.13px;width:200px;text-align:right;left:1808.4px">2.9K</div>
<div class="t" style="font-size:27.9px;color:#1F71CE;top:1507.13px;left:2092.5px">webdesign bv</div>
</div><!--tblend-->
<!-- CHAT -->
<svg class="ic" style="left:2540px;top:1300px" width="160" height="160" viewBox="2540 1300 160 160">
 <defs>
  <linearGradient id="cg" x1="0" y1="0" x2="1" y2="1"><stop offset="0" stop-color="#459CDD"/><stop offset="1" stop-color="#8FC3EB"/></linearGradient>
  <filter id="sh" x="-30%" y="-30%" width="160%" height="160%"><feGaussianBlur in="SourceAlpha" stdDeviation="5"/><feOffset dy="3"/><feComponentTransfer><feFuncA type="linear" slope="0.12"/></feComponentTransfer><feMerge><feMergeNode/><feMergeNode in="SourceGraphic"/></feMerge></filter>
 </defs>
 <rect x="2558" y="1320" width="120" height="120" rx="42" fill="url(#cg)" filter="url(#sh)"/>
 <path d="M2590 1367 L2606 1353.8 H2642 Q2646 1353.8 2646 1357.8 V1389.6 L2618.2 1415.9 V1404.4 H2593 Q2590 1404.4 2590 1401.4 Z" fill="#3F86C2" opacity="0.25" transform="translate(2 2)"/>
 <path d="M2588 1365.3 L2603.5 1351.8 H2642.5 Q2646 1351.8 2646 1355.3 V1387.6 L2616.2 1413.9 V1402.4 H2591 Q2588 1402.4 2588 1399.4 Z" fill="#fff"/>
 <path d="M2603.8 1367.9 H2627 Q2630 1367.9 2630 1370.9 V1385.8 H2606.8 Q2603.8 1385.8 2603.8 1382.8 Z" fill="none" stroke="#5EA2D6" stroke-width="3.5"/>
 <circle cx="2668" cy="1329.8" r="20" fill="#EC1349"/>
 <text x="2668" y="1338.5" text-anchor="middle" font-family="Liberation Sans" font-weight="bold" font-size="24" fill="#fff">2</text>
</svg>
<!-- scrollbar -->
<div class="abs" style="left:2868px;top:0;width:12px;height:1520px;background:#DCDFE4"></div>
<div class="abs" style="left:2868px;top:-10px;width:12px;height:456px;background:#999DA6;border-radius:6px"></div>
<div class="abs" style="left:0;top:0;width:1px;height:1500px;background:#5A6A83"></div>
<!-- MAIN_END -->
</div>
</body></html>
